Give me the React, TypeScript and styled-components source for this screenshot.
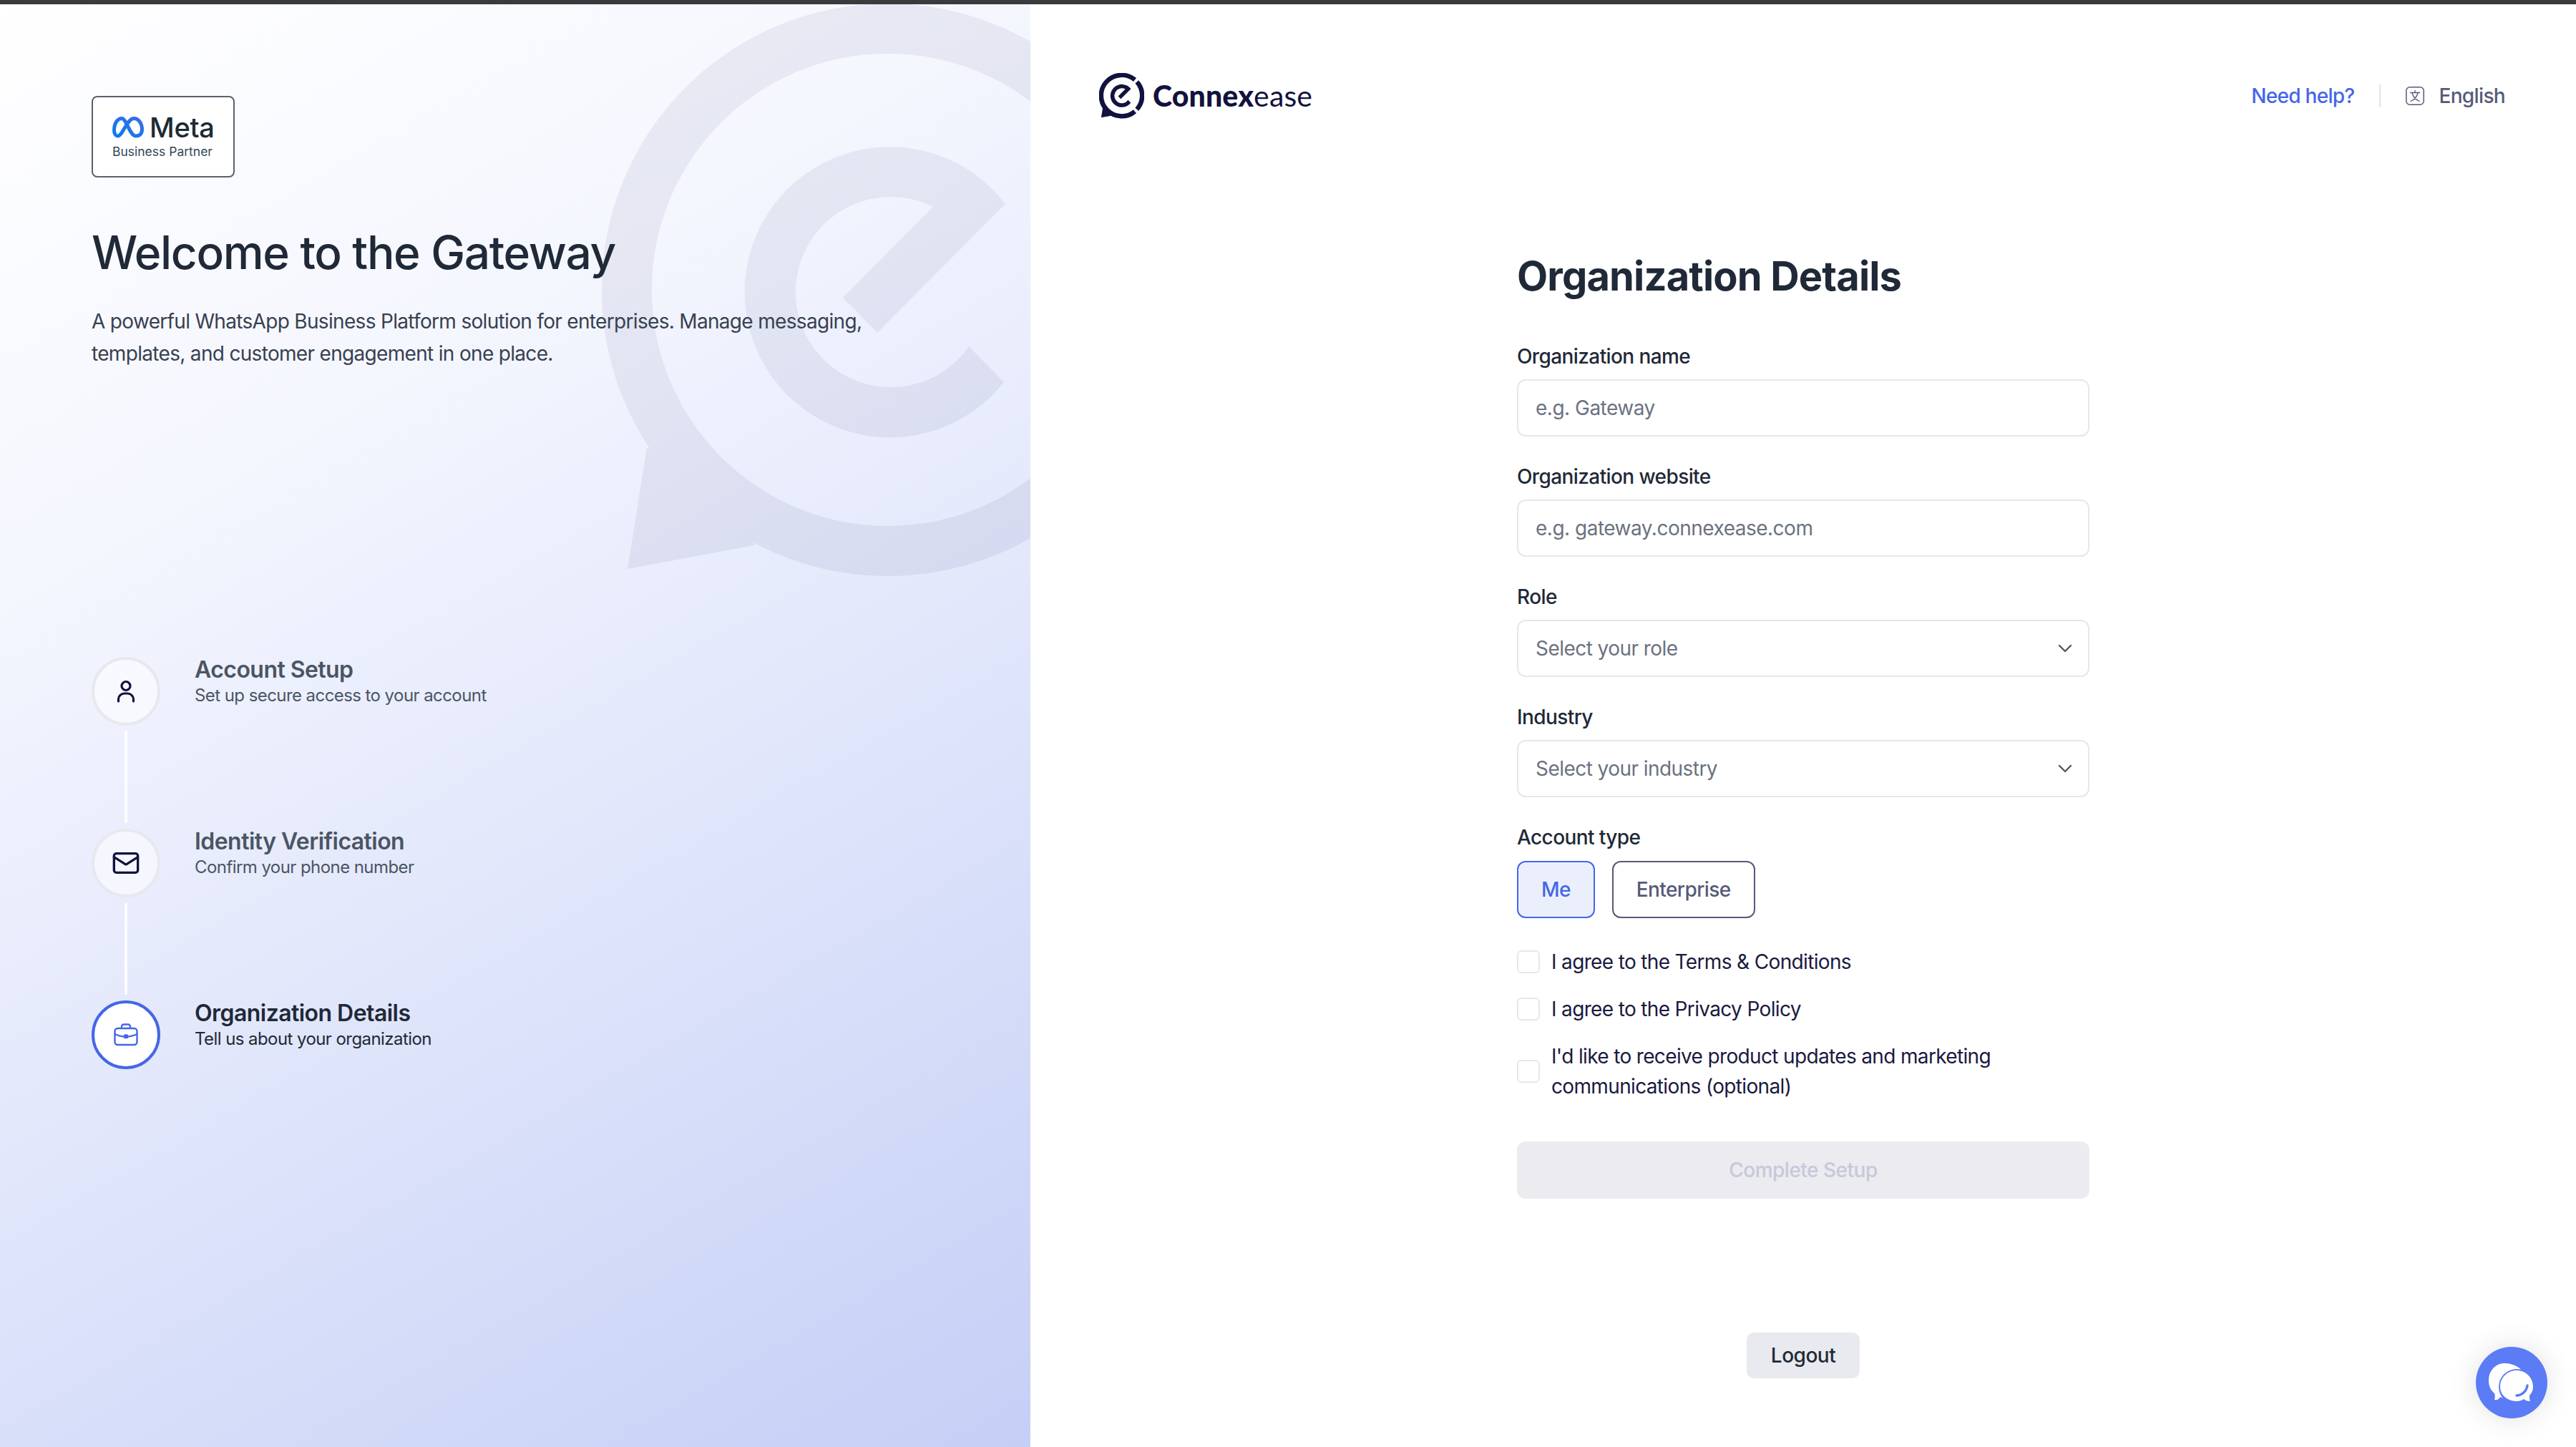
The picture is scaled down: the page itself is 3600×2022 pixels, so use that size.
import React from "react";
import styled, { createGlobalStyle } from "styled-components";
import { ChevronDown, Mail } from "lucide-react";

const Global = createGlobalStyle`
  html, body { margin: 0; padding: 0; background: #fff; }
  body { font-family: Inter, "Liberation Sans", sans-serif; color: #1f2937; }
  * { box-sizing: border-box; }
`;

const Page = styled.div`
  width: 3600px;
  height: 2022px;
  display: flex;
  flex-direction: column;
  overflow: hidden;
  position: relative;
`;
const TopBar = styled.div`
  height: 6px;
  flex: none;
  background: #3a3b3d;
`;
const Columns = styled.div`
  flex: 1;
  display: flex;
  min-height: 0;
`;
const LeftPanel = styled.aside`
  width: 1440px;
  flex: none;
  position: relative;
  overflow: hidden;
  padding: 128px 128px 0;
  background: linear-gradient(150deg, #ffffff 0%, #f4f6fe 30%, #c5cff6 100%);
`;
const Watermark = styled.svg`
  position: absolute;
  left: 840px;
  top: -1px;
  width: 800px;
  height: 810px;
  opacity: 0.058;
  color: #14145a;
`;
const Foreground = styled.div`
  position: relative;
`;
const Badge = styled.div`
  width: 200px;
  height: 114px;
  border: 2px solid #59626c;
  border-radius: 8px;
  background: #fff;
  padding: 25px 0 0 27px;
  display: flex;
  flex-direction: column;
`;
const MetaRow = styled.div`
  display: flex;
  align-items: center;
  gap: 8px;
  height: 34px;
`;
const MetaWord = styled.span`
  font-size: 38px;
  font-weight: 500;
  color: #1c2b33;
  letter-spacing: -0.3px;
  line-height: 34px;
`;
const MetaSub = styled.span`
  font-size: 17.5px;
  font-weight: 400;
  color: #344854;
  line-height: 24px;
  margin-top: 5px;
  white-space: nowrap;
`;
const Title = styled.h1`
  margin: 61px 0 0;
  font-size: 64px;
  line-height: 88px;
  font-weight: 500;
  color: #1f2937;
  letter-spacing: -1.3px;
`;
const Lead = styled.p`
  margin: 30px 0 0;
  width: 1120px;
  font-size: 28px;
  line-height: 45px;
  letter-spacing: -0.68px;
  color: #374151;
`;
const Steps = styled.ol`
  list-style: none;
  margin: 401px 0 0;
  padding: 0;
  display: flex;
  flex-direction: column;
`;
const Step = styled.li`
  display: grid;
  grid-template-columns: 96px 1fr;
  column-gap: 48px;
`;
const StepCircle = styled.div<{ $active?: boolean }>`
  width: 96px;
  height: 96px;
  border-radius: 50%;
  display: flex;
  align-items: center;
  justify-content: center;
  border: 4px solid ${(p) => (p.$active ? "#4466e8" : "#e7e9ef")};
  background: ${(p) => (p.$active ? "#ffffff" : "rgba(255,255,255,.55)")};
  color: ${(p) => (p.$active ? "#4466e8" : "#12123e")};
`;
const StepText = styled.div<{ $active?: boolean }>`
  display: flex;
  flex-direction: column;
  margin-top: -2px;
  color: ${(p) => (p.$active ? "#1f2937" : "#4b5563")};
`;
const StepName = styled.span`
  font-size: 32px;
  line-height: 40px;
  font-weight: 600;
  letter-spacing: -0.55px;
`;
const StepHint = styled.span`
  font-size: 24px;
  line-height: 30px;
  margin-top: 1px;
  letter-spacing: -0.57px;
`;
const Connector = styled.div`
  width: 4px;
  height: 128px;
  margin: 8px 0 8px 46px;
  background: rgba(255, 255, 255, 0.85);
`;

const RightPanel = styled.main`
  flex: 1;
  min-width: 0;
  background: #fff;
  display: flex;
  flex-direction: column;
`;
const Header = styled.header`
  display: flex;
  justify-content: space-between;
  align-items: center;
  height: 70px;
  margin-top: 93px;
  padding: 0 99px 0 96px;
`;
const Brand = styled.div`
  display: flex;
  align-items: center;
  gap: 12px;
`;
const BrandMark = styled.svg`
  width: 63px;
  height: 64px;
  color: #12123e;
`;
const BrandWord = styled.span`
  font-family: Lato, Inter, sans-serif;
  font-size: 41px;
  color: #12123e;
  line-height: 44px;
  letter-spacing: 0.15px;
`;
const BrandBold = styled.b`
  font-weight: 900;
`;
const BrandLight = styled.span`
  font-weight: 400;
`;
const HeaderTools = styled.div`
  display: flex;
  align-items: center;
`;
const HelpLink = styled.a`
  font-size: 28px;
  font-weight: 500;
  letter-spacing: -0.7px;
  color: #4466e8;
  line-height: 34px;
`;
const ToolDivider = styled.span`
  width: 2px;
  height: 32px;
  background: #e2e4ee;
  margin: 0 35px;
`;
const Lang = styled.div`
  display: flex;
  align-items: center;
  gap: 20px;
  color: #565a78;
  font-size: 28px;
  font-weight: 500;
  letter-spacing: -0.65px;
`;
const Form = styled.form`
  width: 800px;
  margin: 181px auto 0;
  display: flex;
  flex-direction: column;
`;
const FormTitle = styled.h2`
  margin: 0 0 55px;
  font-size: 56px;
  line-height: 72px;
  font-weight: 700;
  letter-spacing: -0.85px;
  color: #1f2937;
`;
const Field = styled.div<{ $gap?: number }>`
  display: flex;
  flex-direction: column;
  gap: ${(p) => p.$gap ?? 11}px;
  margin-bottom: 35px;
`;
const Label = styled.label`
  font-size: 28px;
  line-height: 42px;
  font-weight: 500;
  letter-spacing: -0.6px;
  color: #1f2937;
`;
const TextInput = styled.input`
  height: 80px;
  width: 100%;
  padding: 0 24px;
  border: 2px solid #e5e7eb;
  border-radius: 12px;
  font: 400 28px Inter, sans-serif;
  letter-spacing: -0.5px;
  color: #1f2937;
  background: #fff;
  outline: none;
  &::placeholder {
    color: #6b7280;
    opacity: 1;
  }
`;
const SelectBox = styled.div`
  height: 80px;
  padding: 0 16px 0 24px;
  border: 2px solid #e5e7eb;
  border-radius: 12px;
  display: flex;
  align-items: center;
  justify-content: space-between;
  font-size: 28px;
  letter-spacing: -0.55px;
  color: #6b7280;
  svg {
    color: #4b5563;
  }
`;
const ChoiceRow = styled.div`
  display: flex;
  gap: 24px;
`;
const Choice = styled.button<{ $on?: boolean }>`
  height: 80px;
  padding: 0 32px;
  border-radius: 12px;
  font: 500 28px Inter, sans-serif;
  letter-spacing: -0.6px;
  border: 2px solid ${(p) => (p.$on ? "#4466e8" : "#565a78")};
  background: ${(p) => (p.$on ? "#ebeffc" : "#fff")};
  color: ${(p) => (p.$on ? "#4466e8" : "#565a78")};
`;
const Agreements = styled.div`
  display: flex;
  flex-direction: column;
  gap: 24px;
  margin: 5px 0 56px;
`;
const Agreement = styled.label`
  display: flex;
  align-items: center;
  gap: 16px;
  font-size: 28px;
  line-height: 42px;
  letter-spacing: -0.65px;
  color: #1a1a40;
`;
const Tick = styled.span`
  width: 32px;
  height: 32px;
  flex: none;
  border: 2px solid #e5e7eb;
  border-radius: 6px;
  background: #fff;
`;
const Submit = styled.button`
  height: 80px;
  border: none;
  border-radius: 12px;
  background: #ebebf0;
  color: #c6c9d9;
  font: 500 28px Inter, sans-serif;
  letter-spacing: -0.5px;
`;
const Logout = styled.button`
  align-self: center;
  margin-top: 187px;
  width: 158px;
  height: 64px;
  border: none;
  border-radius: 10px;
  background: #e9eaef;
  color: #1f2937;
  font: 500 28px Inter, sans-serif;
  letter-spacing: -0.5px;
`;
const ChatBubble = styled.button`
  position: absolute;
  left: 3460px;
  top: 1882px;
  width: 100px;
  height: 100px;
  padding: 0;
  border: none;
  border-radius: 50%;
  background: #5b7cf5;
  box-shadow: 0 0 40px rgba(0, 0, 0, 0.12);
  display: flex;
`;

const MarkShapes = ({ ring = 70 }: { ring?: number }) => (
  <>
    <g fill="none" stroke="currentColor" strokeWidth={ring}>
      <path d="M1475 125A365 365 0 1 0 1475 685" />
      <path d="M1511 161A365 365 0 0 1 1511 649" />
    </g>
    <path
      fill="currentColor"
      d="M904 626L877 795L1054 762L1000 640ZM1354 484A133 133 0 1 1 1304 289L1178 416L1226 465L1405 285A203 203 0 1 0 1403 534Z"
    />
  </>
);

const MetaGlyph = () => (
  <svg width="44" height="30" viewBox="0 0 44 30" fill="none">
    <defs>
      <linearGradient id="metaGrad" x1="0" y1="1" x2="1" y2="0">
        <stop offset="0" stopColor="#0a7cf0" />
        <stop offset="1" stopColor="#3b6be6" />
      </linearGradient>
    </defs>
    <path
      stroke="url(#metaGrad)"
      strokeWidth="5"
      d="M2.5 19C2.500 9 7.500 2.500 13 2.500C20 2.500 24 27 33 27C38.500 27 41.500 23.500 41.500 18C41.500 9 36.500 2.500 30 2.500C21 2.500 14 27 8 27C4.500 27 2.500 23.500 2.500 19Z"
    />
  </svg>
);

const UserGlyph = () => (
  <svg width="26" height="32" viewBox="0 0 26 32" fill="none" stroke="currentColor" strokeWidth="3.2" strokeLinecap="round">
    <circle cx="13" cy="8.5" r="6" />
    <path d="M2.5 30v-3a8.5 8 0 0 1 8.5-8h4a8.5 8 0 0 1 8.5 8v3" />
  </svg>
);

const CaseGlyph = () => (
  <svg width="34" height="32" viewBox="0 0 34 32" fill="none" stroke="currentColor" strokeWidth="2.4" strokeLinejoin="round">
    <rect x="1.5" y="7" width="31" height="23" rx="4" />
    <path d="M11 7V4.5A3 3 0 0 1 14 1.5h6a3 3 0 0 1 3 3V7" />
    <path d="M1.5 15c5 2.5 10 3.5 15.5 3.5S27.5 17.5 32.5 15" />
    <rect x="15" y="16.5" width="4" height="3.5" rx="0.8" fill="currentColor" />
  </svg>
);

const LangGlyph = () => (
  <svg width="26" height="26" viewBox="0 0 26 26" fill="none" stroke="currentColor" strokeWidth="1.3" strokeLinecap="round">
    <rect x="0.8" y="0.8" width="24.4" height="24.4" rx="5" strokeWidth="1.5" />
    <path d="M13 5.500v3M6.500 8.500h13M17 8.500c-1 5-5 9.500-10 12M9 8.500c1 5 5 9.500 10 12" />
  </svg>
);

const ChatGlyph = () => (
  <svg width="100" height="100" viewBox="0 0 100 100">
    <path
      fill="#fff"
      d="M40 23C54 23 62 30 65 34L45 75L34 70C32 74 29 75 26 74C27 71 27 67 26 65C20 60 18 54 18 47C18 33 28 23 40 23Z"
    />
    <circle cx="57" cy="56" r="25" fill="#5b7cf5" />
    <path
      fill="#fff"
      d="M57 33C70 33 80 43 80 56C80 61 78 65 75 68C75 71 75 73 76 76C72 76 69 75 67 73C64 75 61 76 57 76C44 76 34 67 34 56C34 43 44 33 57 33Z"
    />
    <path fill="none" stroke="#5b7cf5" strokeWidth="3.4" strokeLinecap="round" d="M72 54C71 62 64 68 57 68" />
  </svg>
);

const steps = [
  { name: "Account Setup", hint: "Set up secure access to your account", icon: <UserGlyph /> },
  { name: "Identity Verification", hint: "Confirm your phone number", icon: <Mail size={40} strokeWidth={2} /> },
  { name: "Organization Details", hint: "Tell us about your organization", icon: <CaseGlyph />, active: true },
];

const agreements = [
  "I agree to the Terms & Conditions",
  "I agree to the Privacy Policy",
  "I'd like to receive product updates and marketing communications (optional)",
];

export default function App() {
  return (
    <Page>
      <Global />
      <TopBar />
      <Columns>
        <LeftPanel>
          <Watermark viewBox="840 5 800 810">
            <MarkShapes />
          </Watermark>
          <Foreground>
            <Badge>
              <MetaRow>
                <MetaGlyph />
                <MetaWord>Meta</MetaWord>
              </MetaRow>
              <MetaSub>Business Partner</MetaSub>
            </Badge>
            <Title>Welcome to the Gateway</Title>
            <Lead>
              A powerful WhatsApp Business Platform solution for enterprises. Manage messaging, templates, and customer
              engagement in one place.
            </Lead>
            <Steps>
              {steps.map((s, i) => (
                <React.Fragment key={s.name}>
                  <Step>
                    <StepCircle $active={s.active}>{s.icon}</StepCircle>
                    <StepText $active={s.active}>
                      <StepName>{s.name}</StepName>
                      <StepHint>{s.hint}</StepHint>
                    </StepText>
                  </Step>
                  {i < steps.length - 1 && <Connector />}
                </React.Fragment>
              ))}
            </Steps>
          </Foreground>
        </LeftPanel>
        <RightPanel>
          <Header>
            <Brand>
              <BrandMark viewBox="840 5 800 810">
                <MarkShapes ring={82} />
              </BrandMark>
              <BrandWord>
                <BrandBold>Connex</BrandBold>
                <BrandLight>ease</BrandLight>
              </BrandWord>
            </Brand>
            <HeaderTools>
              <HelpLink>Need help?</HelpLink>
              <ToolDivider />
              <Lang>
                <LangGlyph />
                English
              </Lang>
            </HeaderTools>
          </Header>
          <Form>
            <FormTitle>Organization Details</FormTitle>
            <Field>
              <Label>Organization name</Label>
              <TextInput placeholder="e.g. Gateway" />
            </Field>
            <Field>
              <Label>Organization website</Label>
              <TextInput placeholder="e.g. gateway.connexease.com" />
            </Field>
            <Field>
              <Label>Role</Label>
              <SelectBox>
                Select your role
                <ChevronDown size={32} strokeWidth={1.75} />
              </SelectBox>
            </Field>
            <Field>
              <Label>Industry</Label>
              <SelectBox>
                Select your industry
                <ChevronDown size={32} strokeWidth={1.75} />
              </SelectBox>
            </Field>
            <Field $gap={12}>
              <Label>Account type</Label>
              <ChoiceRow>
                <Choice type="button" $on>
                  Me
                </Choice>
                <Choice type="button">Enterprise</Choice>
              </ChoiceRow>
            </Field>
            <Agreements>
              {agreements.map((a) => (
                <Agreement key={a}>
                  <Tick />
                  <span>{a}</span>
                </Agreement>
              ))}
            </Agreements>
            <Submit type="button">Complete Setup</Submit>
            <Logout type="button">Logout</Logout>
          </Form>
        </RightPanel>
      </Columns>
      <ChatBubble aria-label="Chat">
        <ChatGlyph />
      </ChatBubble>
    </Page>
  );
}
